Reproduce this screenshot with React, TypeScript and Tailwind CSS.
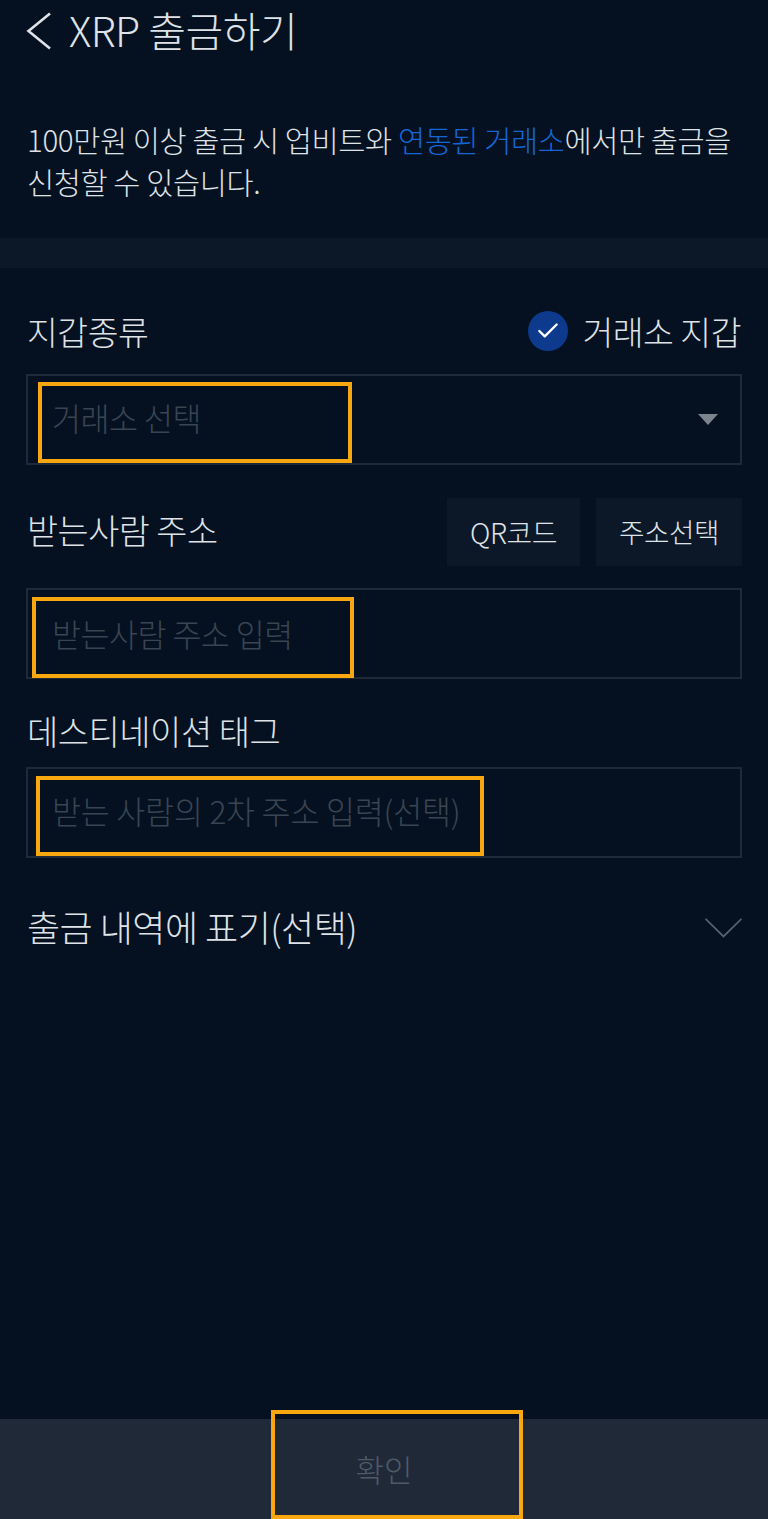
import { Check } from "lucide-react";

const font = { fontFamily: '"Noto Sans CJK KR", "Noto Sans", sans-serif' };

function Field({ text, textClass, children }: { text: string; textClass?: string; children?: React.ReactNode }) {
  return (
    <div className="ml-[26px] mr-[26px] flex h-[91px] items-center justify-between border-2 border-[#1f2937] pl-[24px] pr-[22px]">
      <span className={"text-[31.5px] font-light text-[#3a4452] " + (textClass ?? "tracking-[-0.5px]")}>{text}</span>
      {children}
    </div>
  );
}

export default function App() {
  return (
    <div style={font} className="relative flex h-[1519px] w-[768px] flex-col overflow-hidden bg-[#051120] text-[#dfe2e6]">
      {/* header */}
      <div className="flex h-[62px] items-center pl-[26px]">
        <svg width="26" height="38" viewBox="0 0 26 38" fill="none" stroke="currentColor" strokeWidth="2.6">
          <path d="M24 1.5 L2.5 19 L24 36.5" />
        </svg>
        <span className="ml-[17px] pb-[3px] text-[41px] font-light leading-none tracking-[-0.5px]">XRP 출금하기</span>
      </div>

      <p className="mt-[56px] h-[120px] whitespace-nowrap px-[27px] text-[29.5px] font-light leading-[42px] tracking-[-0.4px]">
        100만원 이상 출금 시 업비트와 <span className="text-[#1466d6]">연동된 거래소</span>에서만 출금을
        <br />
        신청할 수 있습니다.
      </p>

      <div className="h-[30px] bg-[#0c1827]" />

      {/* wallet type */}
      <div className="flex h-[106px] items-center justify-between px-[27px] pt-[20px]">
        <span className="text-[33.5px] font-light tracking-[-0.5px]">지갑종류</span>
        <div className="flex items-center gap-[14px]">
          <span className="flex h-[40px] w-[40px] items-center justify-center rounded-full bg-[#0d3a8c]">
            <Check className="h-[26px] w-[26px] text-white" strokeWidth={2.2} />
          </span>
          <span className="text-[33.5px] font-light tracking-[-0.5px]">거래소 지갑</span>
        </div>
      </div>
      <Field text="거래소 선택" textClass="tracking-[-0.5px] pb-[3px]">
        <span className="h-0 w-0 border-x-[10px] border-t-[11px] border-x-transparent border-t-[#7b838d]" />
      </Field>

      {/* address */}
      <div className="mt-[33px] flex h-[68px] items-center justify-between pl-[27px] pr-[26px]">
        <span className="pb-[4px] text-[33.8px] font-light tracking-[-0.5px]">받는사람 주소</span>
        <div className="flex gap-[16px]">
          <button className="h-[68px] w-[133px] bg-[#0c1827] text-[28px] font-light tracking-[-0.5px]">QR코드</button>
          <button className="h-[68px] w-[146px] bg-[#0c1827] text-[27.7px] font-light tracking-[-0.5px]">주소선택</button>
        </div>
      </div>
      <div className="mt-[22px]">
        <Field text="받는사람 주소 입력" />
      </div>

      {/* destination tag */}
      <div className="flex h-[88px] items-center px-[27px] pt-[18px]">
        <span className="pb-[3px] text-[34px] font-light tracking-[-0.5px]">데스티네이션 태그</span>
      </div>
      <Field text="받는 사람의 2차 주소 입력(선택)" textClass="tracking-[-0.2px] pb-[3px]" />

      {/* memo */}
      <div className="mt-[32px] flex h-[76px] items-center justify-between pl-[27px] pr-[26px]">
        <span className="pb-[5px] text-[36px] font-light tracking-[-0.5px]">출금 내역에 표기(선택)</span>
        <svg width="37" height="20" viewBox="0 0 37 20" fill="none" stroke="#566070" strokeWidth="1.8">
          <path d="M0.5 0.8 L18.5 18.5 L36.5 0.8" />
        </svg>
      </div>

      <div className="flex-1" />

      <div className="flex h-[100px] items-center justify-center bg-[#1f2937] text-[31px] font-light text-[#505a67]">
        확인
      </div>

      {/* orange highlight boxes */}
      <div className="absolute left-[38px] top-[382px] h-[81px] w-[314px] border-4 border-[#f9a70f]" />
      <div className="absolute left-[32px] top-[597px] h-[81px] w-[322px] border-4 border-[#f9a70f]" />
      <div className="absolute left-[36px] top-[776px] h-[80px] w-[448px] border-4 border-[#f9a70f]" />
      <div className="absolute left-[271px] top-[1410px] h-[109px] w-[252px] border-4 border-[#f9a70f]" />
    </div>
  );
}
